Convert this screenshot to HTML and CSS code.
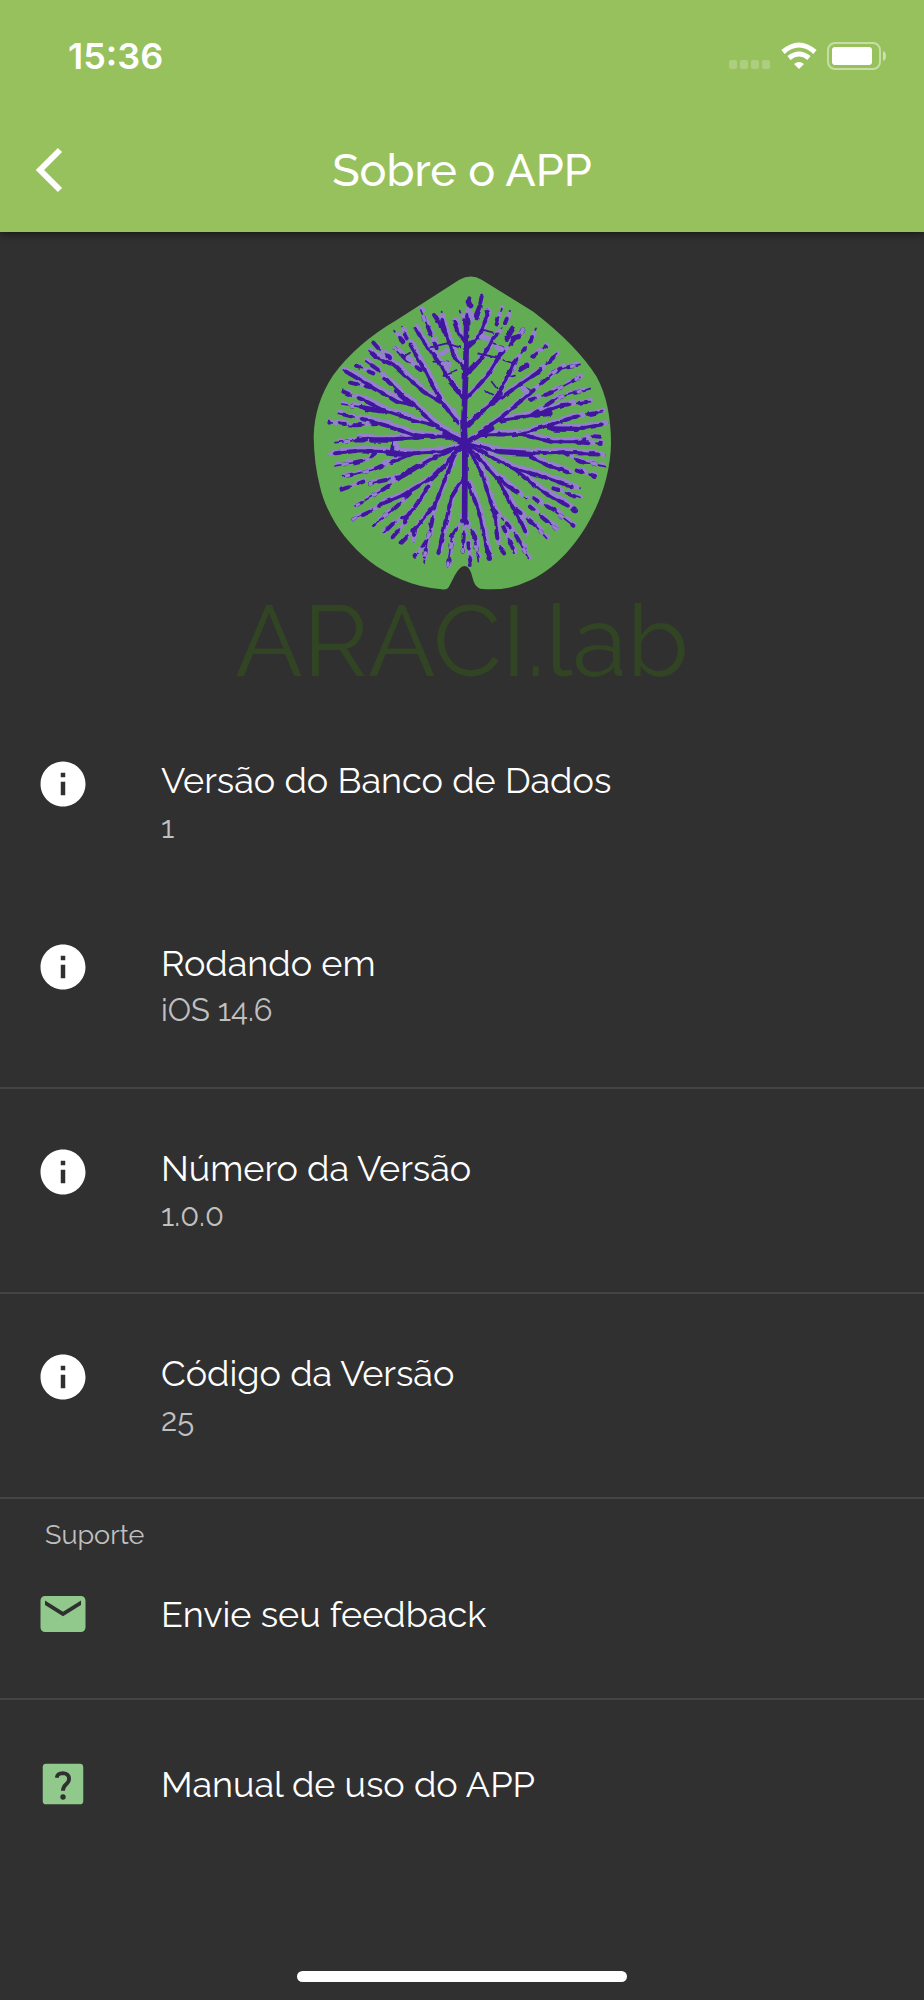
FILE: index.html
```html
<!DOCTYPE html>
<html lang="pt-BR">
<head>
	<meta charset="utf-8">
	<meta name="viewport" content="width=device-width, initial-scale=1">
	<title>Sobre o APP</title>
	<link rel="stylesheet" href="styles.css">
</head>
<body>
	<header class="app-header">
		<div class="status-bar">
			<span class="time">15:36</span>
			<div class="status-icons">
				<svg width="42" height="28" viewBox="0 0 42 28" fill="#fff" fill-opacity="0.22">
					<rect x="0" y="18" width="8" height="9" rx="2"/>
					<rect x="11" y="18" width="8" height="9" rx="2"/>
					<rect x="22" y="18" width="8" height="9" rx="2"/>
					<rect x="33" y="18" width="8" height="9" rx="2"/>
				</svg>
				<svg width="36" height="28" viewBox="0 0 36 28" fill="none" stroke="#fff" stroke-width="5">
					<path d="M2 10Q18 -4 34 10"/>
					<path d="M8 16Q18 8 28 16"/>
					<path d="M18 27L13 22Q18 18 23 22Z" fill="#fff" stroke="none"/>
				</svg>
				<svg width="60" height="28" viewBox="0 0 60 28">
					<rect x="1" y="1" width="52" height="26" rx="7" fill="none" stroke="#fff" stroke-opacity="0.45" stroke-width="2"/>
					<rect x="5" y="5" width="40" height="18" rx="3" fill="#fff"/>
					<path d="M56 9Q59 10 59 14Q59 18 56 19Z" fill="#fff" fill-opacity="0.5"/>
				</svg>
			</div>
		</div>
		<div class="toolbar">
			<button type="button" class="back" aria-label="Voltar">
				<svg width="28" height="46" viewBox="0 0 28 46" fill="none" stroke="#fff" stroke-width="6">
					<path d="M25 3L5 23L25 43"/>
				</svg>
			</button>
			<h1>Sobre o APP</h1>
		</div>
	</header>

	<main>
		<div class="logo">
			<svg class="leaf" width="300" height="317" viewBox="36 45 900 951">
				<defs>
					<!-- uneven, hand-inked edges -->
					<filter id="rough" x="-5%" y="-5%" width="110%" height="110%">
						<feTurbulence type="fractalNoise" baseFrequency="0.03" numOctaves="2" seed="4"/>
						<feDisplacementMap in="SourceGraphic" scale="9" xChannelSelector="R" yChannelSelector="G"/>
					</filter>
					<!-- main veins -->
					<g id="veins">
						<path d="M495 420L455 375L425 320L385 265L345 205M495 330L465 295L445 240L428 190M497 250L475 220L462 185"/>
						<path d="M475 490L420 420L380 340L330 255M420 425L370 395L280 315L225 290M495 550L450 525L400 490L340 435L265 365"/>
						<path d="M340 435L290 425L215 380L150 342M400 495L340 480L250 450L190 420M450 530L340 525L270 500L200 480"/>
						<path d="M495 545L460 528L340 534L240 540L175 534M495 552L430 575L340 580L270 575L180 572L120 578M340 580L280 605"/>
						<path d="M495 552L390 600L305 650M495 552L440 610L385 660L310 705L250 730M385 680L345 740L320 770M470 570L430 670L405 735L350 800"/>
						<path d="M493 650L455 710L435 790L415 880M505 670L535 750L555 840L567 895M495 550L545 640L570 720L585 760L590 820"/>
						<path d="M495 550L595 660L640 745L670 800M595 655L640 690M495 550L640 625L720 690L790 730M640 625L730 650L800 675"/>
						<path d="M495 550L600 575L700 580L790 577L880 583M690 590L740 615L790 632M545 525L660 522L750 545L850 545"/>
						<path d="M660 522L750 495L820 472M750 505L830 507L890 496M600 482L700 465L790 435M495 550L600 475L690 400"/>
						<path d="M580 430L650 380L710 340M500 495L575 430L620 360L640 310M500 415L560 350L600 285M500 345L550 290L580 235M500 265L540 225L562 165"/>
					</g>
					<!-- twigs towards the edge -->
					<g id="twigs">
						<path d="M410 265L385 205L362 150M438 225L422 195L402 165M428 195L425 155M497 195L482 152M500 180L508 112M530 175L545 110"/>
						<path d="M362 330L320 300L282 263M270 295L240 270L220 248M225 290L207 272M320 235L306 200M310 245L282 212M265 365L235 330L197 303M220 340L168 320"/>
						<path d="M150 342L130 330M215 382L150 368M190 420L130 395M250 455L190 442L125 432M200 480L115 460M230 492L145 497M135 492L85 488"/>
						<path d="M240 540L160 542L105 548M120 578L85 583M225 580L200 600L105 618M290 600L200 635L128 650M275 575L280 550M305 650L210 670M305 650L240 695L165 738M190 665L122 690"/>
						<path d="M250 730L210 755L160 778M330 700L290 740L220 795M320 770L285 785L250 820M320 775L300 805L275 835M350 800L305 848M345 810L338 845M405 730L395 790L380 850L372 910M375 845L345 890"/>
						<path d="M494 770L455 830L443 920M494 775L488 875M494 775L525 830L535 905M505 850L512 915M590 820L595 855L615 880M580 745L610 780"/>
						<path d="M640 690L680 715M650 750L700 790L740 835M670 800L680 825M620 790L650 830L685 895M610 800L645 880M700 715L760 750L820 797M690 740L730 775L770 808"/>
						<path d="M790 730L825 748M800 675L840 685M760 685L840 715M880 583L915 585M790 577L840 605L915 620M790 632L812 640M830 632L885 648M850 545L905 552M840 545L870 528L900 530"/>
						<path d="M820 472L908 455M890 496L925 490M790 435L870 425M700 462L770 415L870 385M690 400L770 330L840 313M690 420L750 400L840 352M770 335L795 312"/>
						<path d="M710 340L770 283M640 310L675 265M600 285L640 245L670 205M580 235L605 205M562 165L560 155M590 190L603 145M615 190L630 152M620 240L640 200M690 245L708 205M700 290L738 258M660 330L685 310"/>
					</g>
				</defs>
				<path fill="#62ac54" d="M478 59Q513 40 545 59L700 155Q830 255 890 350Q933 430 933 550C930 740 800 920 680 965Q620 995 540 986Q524 980 518 955Q510 918 494 918Q480 918 465 945L446 982Q440 991 425 988C220 970 90 810 60 680Q42 610 41 530Q43 430 100 345Q170 250 290 180Z"/>
				<g filter="url(#rough)">
					<g class="shade">
						<use href="#veins" x="4" y="-6"/>
						<use class="patches" href="#twigs" x="3" y="-4"/>
					</g>
					<g class="ink">
						<use href="#veins"/>
						<use class="thin" href="#twigs"/>
						<use class="blots" href="#twigs"/>
						<use class="blots" href="#veins"/>
						<path class="thin" d="M380 265L440 250L478 262M400 305L445 308M430 345L470 330M535 235L580 240M545 208L580 218M535 280L600 295M580 250L610 262M610 300L645 312M575 365L590 385M555 392L578 405M625 352L645 347M660 375L690 390M310 290L330 278"/>
					</g>
					<use class="glints" href="#twigs"/>
					<path class="shade" d="M545 232L565 235M430 312L445 316M425 280L440 272M590 262L605 268M670 385L680 395M325 295L335 300M255 608L262 605M290 555L292 565M512 160L515 175M487 765L500 762"/>
					<g class="ink">
						<path class="trunk" d="M500 185L497 340L492 480L495 550L494 770"/>
						<path class="thick" d="M495 550L435 520M495 550L520 535L575 505M494 560V680M575 430L600 400M505 495L535 465M600 575L690 580M760 507L830 508M310 645L350 620M395 655L430 620M265 580L310 583M215 540L280 540M290 395L330 430M500 340L525 315M500 262L520 245M455 370L475 395M425 190L432 210M622 232L638 205M662 326L680 316M705 465L750 460M195 445L240 452M563 875L568 895M822 747L826 752M640 235L655 230M530 165L540 140M505 125L512 140"/>
					</g>
				</g>
			</svg>
			<p class="brand">ARACI.lab</p>
		</div>

		<svg class="symbols">
			<symbol id="info" viewBox="0 0 24 24">
				<path d="M12 2C6.480 2 2 6.480 2 12s4.480 10 10 10 10-4.480 10-10S17.520 2 12 2zm1 15h-2v-6h2v6zm0-8h-2V7h2v2z"/>
			</symbol>
		</svg>

		<div class="tile">
			<svg class="icon"><use href="#info"/></svg>
			<div>
				<p class="title">Versão do Banco de Dados</p>
				<p class="subtitle">1</p>
			</div>
		</div>
		<div class="tile">
			<svg class="icon"><use href="#info"/></svg>
			<div>
				<p class="title">Rodando em</p>
				<p class="subtitle">iOS 14.6</p>
			</div>
		</div>
		<hr>
		<div class="tile">
			<svg class="icon"><use href="#info"/></svg>
			<div>
				<p class="title">Número da Versão</p>
				<p class="subtitle">1.0.0</p>
			</div>
		</div>
		<hr>
		<div class="tile">
			<svg class="icon"><use href="#info"/></svg>
			<div>
				<p class="title">Código da Versão</p>
				<p class="subtitle">25</p>
			</div>
		</div>
		<hr>

		<h2>Suporte</h2>
		<a class="tile action" href="#feedback">
			<svg class="icon" viewBox="0 0 24 24">
				<path d="M20 4H4c-1.100 0-1.990.9-1.990 2L2 18c0 1.100.9 2 2 2h16c1.100 0 2-.9 2-2V6c0-1.100-.9-2-2-2zm0 4l-8 5-8-5V6l8 5 8-5v2z"/>
			</svg>
			<span class="title">Envie seu feedback</span>
		</a>
		<hr>
		<a class="tile action" href="#manual">
			<svg class="icon" viewBox="0 0 24 24">
				<rect x="3" y="3" width="18" height="18" rx="1.500"/>
				<path d="M9.200 9.200Q9.500 7.200 12 7.200Q14.700 7.400 14.700 9.800Q14.700 11 13.300 12.200Q12 13.300 12 15" fill="none" stroke="#303030" stroke-width="1.700"/>
				<circle cx="12" cy="17.800" r="1.200" fill="#303030"/>
			</svg>
			<span class="title">Manual de uso do APP</span>
		</a>
	</main>

	<div class="home-indicator"></div>
</body>
</html>
```

FILE: styles.css
```css
* {
	box-sizing: border-box;
}

body {
	display: flex;
	flex-direction: column;
	min-height: 100vh;
	margin: 0;
	background-color: #303030;
	color: #fff;
	font-family: Raleway, Lato, sans-serif;
}

h1,
h2,
p {
	margin: 0;
	font-weight: 400;
}

.app-header {
	background-color: #97c15c;
	box-shadow: 0 2px 8px rgba(0, 0, 0, 0.5);
}

.status-bar {
	display: flex;
	justify-content: space-between;
	align-items: center;
	height: 112px;
	padding: 0 37px 0 68px;
}

.time {
	font-family: Inter, sans-serif;
	font-size: 36px;
	font-weight: 600;
}

.status-icons {
	display: flex;
	gap: 10px;
}

.toolbar {
	display: grid;
	grid-template-columns: 100px 1fr 100px;
	align-items: center;
	height: 120px;
	padding-bottom: 4px;
}

.back {
	display: flex;
	padding: 0 0 0 35px;
	border: none;
	background: none;
	cursor: pointer;
}

h1 {
	padding-top: 2px;
	font-size: 45px;
	font-weight: 500;
	line-height: 56px;
	text-align: center;
}

.logo {
	display: flex;
	flex-direction: column;
	align-items: center;
	padding: 43px 0 22px;
}

.leaf {
	fill: none;
	stroke-linecap: round;
	stroke-linejoin: round;
}

.shade {
	stroke: #9681cf;
	stroke-width: 16px;
}

.patches {
	stroke-width: 14px;
	stroke-dasharray: 24px 22px 8px 18px;
}

.ink {
	stroke: #40199e;
	stroke-width: 9px;
}

.ink .thin {
	stroke-width: 5px;
}

.ink .thick {
	stroke-width: 16px;
}

.ink .trunk {
	stroke-width: 17px;
}

.blots {
	stroke-width: 12px;
	stroke-dasharray: 14px 34px 22px 26px 6px 40px;
}

.glints {
	stroke: #9681cf;
	stroke-width: 10px;
	stroke-dasharray: 6px 62px 10px 48px;
	stroke-dashoffset: -26px;
}

.brand {
	color: #314423;
	font-size: 100px;
	line-height: 98px;
}

.symbols {
	display: none;
}

.tile {
	display: flex;
	gap: 71px;
	padding: 45px 36px 39px;
	color: #fff;
	text-decoration: none;
}

.icon {
	flex: none;
	width: 54px;
	height: 54px;
	fill: #fff;
}

.title {
	font-size: 36px;
	line-height: 46px;
}

.subtitle {
	color: #c0c0c0;
	font-size: 31px;
	line-height: 48px;
}

.tile > div {
	height: 99px;
}

hr {
	height: 2px;
	margin: 9px 0 11px;
	border: none;
	background-color: #444;
}

h2 {
	padding: 9px 45px 3px;
	color: #c0c0c0;
	font-size: 27px;
	line-height: 32px;
}

.action {
	align-items: center;
	padding-top: 46px;
	padding-bottom: 48px;
}

h2 + .action {
	padding-top: 33px;
}

.action .icon {
	fill: #91c88c;
}

.home-indicator {
	width: 330px;
	height: 11px;
	margin: auto auto 18px;
	border-radius: 6px;
	background-color: #fff;
}
```
